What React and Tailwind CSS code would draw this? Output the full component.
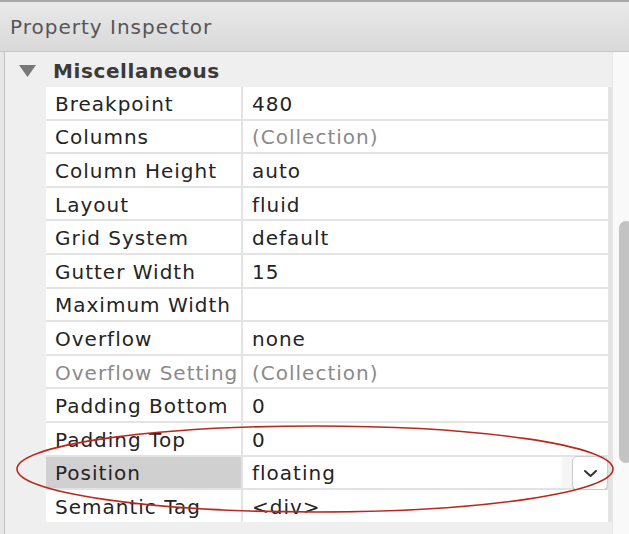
import React from 'react';

const rows = [
  { label: 'Breakpoint', value: '480' },
  { label: 'Columns', value: '(Collection)', muted: true },
  { label: 'Column Height', value: 'auto' },
  { label: 'Layout', value: 'fluid' },
  { label: 'Grid System', value: 'default' },
  { label: 'Gutter Width', value: '15' },
  { label: 'Maximum Width', value: '' },
  { label: 'Overflow', value: 'none' },
  { label: 'Overflow Setting', value: '(Collection)', muted: true, mutedLabel: true },
  { label: 'Padding Bottom', value: '0' },
  { label: 'Padding Top', value: '0' },
  { label: 'Position', value: 'floating', selected: true, dropdown: true },
  { label: 'Semantic Tag', value: '<div>' },
];

const PropertyRow = ({ row }) => (
  <>
    <div
      className={`h-[31.6px] pl-[9px] pt-[2px] flex items-center overflow-hidden whitespace-nowrap ${
        row.selected ? 'bg-[#d0d0d0]' : 'bg-white'
      } ${row.mutedLabel ? 'text-[#8a8a8a]' : 'text-[#242424]'}`}
    >
      {row.label}
    </div>
    <div className="h-[31.6px] pl-[9px] flex items-center bg-white whitespace-nowrap">
      <span className={`flex-1 pt-[2px] ${row.muted ? 'text-[#8a8a8a]' : 'text-[#242424]'}`}>{row.value}</span>
      {row.dropdown && (
        <div className="h-full flex items-center bg-[#f5f5f5] pl-[10px]">
          <button className="w-[36px] h-[34px] mt-[2px] rounded-[5px] bg-white border border-[#cdcdcd] shadow-[0_1px_1px_rgba(0,0,0,0.12)] flex items-center justify-center">
            <svg width="15" height="9" viewBox="0 0 15 9" fill="none">
              <path d="M2 2l5.5 5L13 2" stroke="#333" strokeWidth="2" strokeLinecap="round" strokeLinejoin="round" />
            </svg>
          </button>
        </div>
      )}
    </div>
  </>
);

export default function App() {
  return (
    <div className="relative w-[629px] h-[534px] overflow-hidden bg-[#e6e6e6] flex flex-col font-['DejaVu_Sans',sans-serif] text-[20px] tracking-[1px]">
      {/* Title bar */}
      <div className="h-[52px] shrink-0 border-t-2 border-[#a9a9a9] border-b border-b-[#c6c6c6] bg-gradient-to-b from-[#e9e9e9] to-[#d9d9d9] px-[10px] flex items-center text-[#565656]">
        Property Inspector
      </div>

      {/* Panel */}
      <div className="flex-1 flex ml-[4px] border-l border-[#c4c4c4]">
        <div className="flex-1 bg-[#efefef]">
          <div className="h-[35px] pt-[2px] flex items-center">
            <svg className="ml-[14px]" width="17" height="12" viewBox="0 0 17 12">
              <path d="M0 0h17L8.5 12z" fill="#787878" />
            </svg>
            <span className="ml-[17px] font-bold text-[#3a3a3a] tracking-[0.6px]">Miscellaneous</span>
          </div>
          <div className="ml-[41px] pr-[4px] bg-[#e3e3e3] grid grid-cols-[195px_1fr] gap-[2px]">
            {rows.map((row) => (
              <PropertyRow key={row.label} row={row} />
            ))}
          </div>
        </div>

        {/* Scrollbar */}
        <div className="w-[17px] shrink-0 bg-[#f9f9f9] border-l border-[#e6e6e6]">
          <div className="mt-[169px] ml-[6px] w-[14px] h-[242px] rounded-full bg-[#c3c3c3]" />
        </div>
      </div>

      {/* Annotation */}
      <svg className="absolute inset-0 pointer-events-none" width="629" height="534">
        <ellipse cx="315" cy="469" rx="298" ry="43" fill="none" stroke="#b9281b" strokeWidth="1.6" />
      </svg>
    </div>
  );
}
